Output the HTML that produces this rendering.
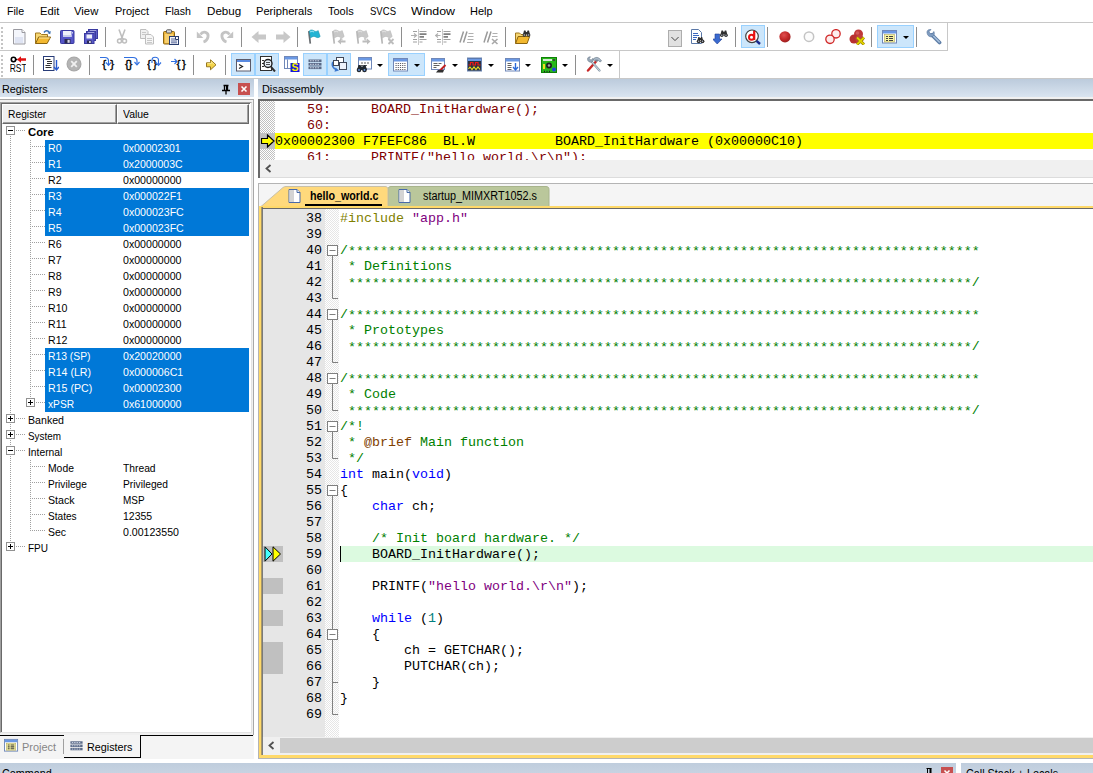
<!DOCTYPE html>
<html><head><meta charset="utf-8"><title>uVision</title>
<style>
*{box-sizing:border-box;margin:0;padding:0}
html,body{width:1093px;height:773px;overflow:hidden;background:#fff}
body{position:relative;font-family:"Liberation Sans",sans-serif;font-size:12px;color:#000}
.a{position:absolute}
.f{transform-origin:0 50%;display:inline-block}
.menu span{position:absolute;top:4px;font-size:11.500px;line-height:14px;white-space:nowrap;color:#000}
.tb{position:absolute;background:#fff}
.ttl{position:absolute;height:18px;top:79px;background:linear-gradient(#bccbdc,#d9e4f0);font-size:11.500px;line-height:20px;color:#000;overflow:hidden}
.tree{position:absolute;font-size:11px;line-height:16px;white-space:nowrap}
.row{position:absolute;left:0;height:16px;white-space:nowrap}
.sel{position:absolute;left:45px;width:204px;height:16px;background:#0078d7}
.row span{position:absolute;top:0}
.w{color:#fff}
.mono{font-family:"Liberation Mono",monospace;font-size:13.333px;line-height:16px;white-space:pre}
.dis{color:#800000}
.ln{position:absolute;left:262px;width:60px;text-align:right;color:#000}
.cl{position:absolute;left:340px}
.as{position:relative;top:1px}
.cm{color:#008000}.kw{color:#0000ff}.st{color:#800080}.pp{color:#808000}.nm{color:#008080}
</style></head><body>

<div class="a menu" style="left:0;top:0;width:1093px;height:22px;background:#fff">
<span class="f" style="left:6.7px;transform:scaleX(0.923)">File</span>
<span class="f" style="left:39.5px;transform:scaleX(0.973)">Edit</span>
<span class="f" style="left:74.2px;transform:scaleX(0.983)">View</span>
<span class="f" style="left:114.7px;transform:scaleX(0.950)">Project</span>
<span class="f" style="left:164.8px;transform:scaleX(0.924)">Flash</span>
<span class="f" style="left:206.5px;transform:scaleX(1.009)">Debug</span>
<span class="f" style="left:256.2px;transform:scaleX(0.968)">Peripherals</span>
<span class="f" style="left:328px;transform:scaleX(0.957)">Tools</span>
<span class="f" style="left:370.3px;transform:scaleX(0.830)">SVCS</span>
<span class="f" style="left:411.3px;transform:scaleX(1.076)">Window</span>
<span class="f" style="left:470.2px;transform:scaleX(0.955)">Help</span>
</div>
<div class="a" style="left:0;top:22px;width:1093px;height:1px;background:#c8c8c8"></div>
<div class="a" style="left:0;top:50px;width:948px;height:1px;background:#c8c8c8"></div>
<div class="a" style="left:947px;top:22px;width:1px;height:29px;background:#c8c8c8"></div>
<div class="a" style="left:0;top:78px;width:1093px;height:1px;background:#c8c8c8"></div>
<div class="a" style="left:619px;top:50px;width:1px;height:29px;background:#c8c8c8"></div>
<div class="a" style="left:1px;top:27px;width:2px;height:2px;background:#c4c4c4"></div>
<div class="a" style="left:1px;top:31px;width:2px;height:2px;background:#c4c4c4"></div>
<div class="a" style="left:1px;top:35px;width:2px;height:2px;background:#c4c4c4"></div>
<div class="a" style="left:1px;top:39px;width:2px;height:2px;background:#c4c4c4"></div>
<div class="a" style="left:1px;top:43px;width:2px;height:2px;background:#c4c4c4"></div>
<div class="a" style="left:1px;top:47px;width:2px;height:2px;background:#c4c4c4"></div>
<div class="a" style="left:1px;top:55px;width:2px;height:2px;background:#c4c4c4"></div>
<div class="a" style="left:1px;top:59px;width:2px;height:2px;background:#c4c4c4"></div>
<div class="a" style="left:1px;top:63px;width:2px;height:2px;background:#c4c4c4"></div>
<div class="a" style="left:1px;top:67px;width:2px;height:2px;background:#c4c4c4"></div>
<div class="a" style="left:1px;top:71px;width:2px;height:2px;background:#c4c4c4"></div>
<div class="a" style="left:1px;top:75px;width:2px;height:2px;background:#c4c4c4"></div>
<svg class="a" style="left:12px;top:29px" width="16" height="16" viewBox="0 0 16 16"><path d="M1.5 .5h8.5l3 3v11.5h-11.5z" fill="#f4f6fc" stroke="#9a9aa0"/><path d="M3 8h8v6h-8z" fill="#dfe4f3" stroke="none"/><path d="M10 .5v3h3" fill="#fff" stroke="#9a9aa0"/></svg>
<svg class="a" style="left:35px;top:29px" width="16" height="16" viewBox="0 0 16 16"><path d="M9 3.5c1.5-2.3 4.5-2.3 5.5.3" fill="none" stroke="#3a6fb0" stroke-width="1.4"/><path d="M15.8 2l-.6 3.2-2.8-1.2z" fill="#3a6fb0"/><path d="M.5 14.5v-10.500h4.500l1.500 1.500h6v3" fill="#f7d774" stroke="#a07820"/><path d="M.6 14.500l3-6.500h12l-3.500 6.500z" fill="#f2b830" stroke="#8a6410"/><path d="M4 9h10.500" stroke="#fde9a0" stroke-width="1"/></svg>
<svg class="a" style="left:60px;top:29px" width="16" height="16" viewBox="0 0 16 16"><rect x=".5" y="1.500" width="13.500" height="13" rx=".8" fill="#5555c8" stroke="#3a3aa0"/><rect x="3" y="2" width="8.500" height="6" fill="#eef0fa"/><path d="M3 6h8.500v2h-8.500z" fill="#c8cdea"/><rect x="4.500" y="10" width="6" height="4.500" fill="#2a2a50"/><rect x="7.500" y="10.800" width="2.200" height="3" fill="#d8d8e8"/><rect x="12" y="3" width="1" height="1.500" fill="#c8cdea"/></svg>
<svg class="a" style="left:84px;top:29px" width="16" height="16" viewBox="0 0 16 16"><rect x="4.500" y=".5" width="9" height="9" fill="#6060c8" stroke="#3a3aa0"/><rect x="6" y="1.500" width="6" height="1.500" fill="#e8eaf8"/><rect x="2.500" y="2.500" width="9" height="9" fill="#6060c8" stroke="#3a3aa0"/><rect x="4" y="3.500" width="6" height="1.500" fill="#e8eaf8"/><rect x=".5" y="4.500" width="9.500" height="10" fill="#5a5ac8" stroke="#3a3aa0"/><rect x="2.500" y="5.500" width="5.500" height="4" fill="#eef0fa"/><rect x="3" y="11.500" width="4.500" height="3" fill="#2a2a50"/><rect x="5" y="12" width="1.800" height="2" fill="#d0d0e0"/></svg>
<svg class="a" style="left:114px;top:29px" width="16" height="16" viewBox="0 0 16 16"><path d="M5 .5l3 8M11 .5l-3 8" stroke="#bebebe" stroke-width="1.600" fill="none"/><circle cx="5.500" cy="12" r="2" fill="none" stroke="#bebebe" stroke-width="1.500"/><circle cx="10.500" cy="12" r="2" fill="none" stroke="#bebebe" stroke-width="1.500"/><path d="M8 8.500l-1.800 2M8 8.500l1.800 2" stroke="#bebebe" stroke-width="1.400"/></svg>
<svg class="a" style="left:139px;top:29px" width="16" height="16" viewBox="0 0 16 16"><path d="M1.500 .5h5.500l2 2v7h-7.500z" fill="#f0f0f0" stroke="#bebebe"/><path d="M6.500 5.500h5.500l2.500 2.500v7h-8z" fill="#f6f6f6" stroke="#bebebe"/><path d="M3 3.500h4M3 5.500h3M8 9.500h5M8 11.500h5M8 13.500h5" stroke="#c8c8c8"/></svg>
<svg class="a" style="left:163px;top:29px" width="16" height="16" viewBox="0 0 16 16"><rect x=".5" y="2.500" width="11" height="12.500" rx="1" fill="#eab33a" stroke="#8a6414"/><rect x="3.500" y=".8" width="5" height="3.200" rx=".8" fill="#d8d8d8" stroke="#5a5a5a"/><rect x="2" y="5" width="8" height="9" fill="#f7d070"/><rect x="6.500" y="7.500" width="9" height="8" fill="#f2f4fa" stroke="#283c6e"/><path d="M8 10h4M8 12h6M8 13.800h6" stroke="#5a6a9a"/><path d="M12.500 7.500v3h3" fill="#fff" stroke="#283c6e"/></svg>
<svg class="a" style="left:195px;top:29px" width="16" height="16" viewBox="0 0 16 16"><path d="M5.500 5.500c2.500-4 8.500-2.500 7.500 2.500c-.5 2.500-2 4.200-4.500 5" fill="none" stroke="#c4c4c4" stroke-width="2.800"/><path d="M1.800 2.500v6.500h6.500z" fill="#c4c4c4"/></svg>
<svg class="a" style="left:219px;top:29px" width="16" height="16" viewBox="0 0 16 16"><path d="M10.500 5.500c-2.500-4-8.500-2.500-7.500 2.500c.5 2.500 2 4.200 4.500 5" fill="none" stroke="#c4c4c4" stroke-width="2.800"/><path d="M14.200 2.500v6.500h-6.500z" fill="#c4c4c4"/></svg>
<svg class="a" style="left:251px;top:29px" width="16" height="16" viewBox="0 0 16 16"><path d="M.5 8l7-6v3.500h7.500v5h-7.500v3.500z" fill="#c8c8c8"/></svg>
<svg class="a" style="left:275px;top:29px" width="16" height="16" viewBox="0 0 16 16"><path d="M15.500 8l-7-6v3.500h-7.500v5h7.500v3.500z" fill="#c8c8c8"/></svg>
<svg class="a" style="left:307px;top:29px" width="16" height="16" viewBox="0 0 16 16"><path d="M1.800 2.200l1.500 12.500" stroke="#686c70" stroke-width="1.700"/><path d="M2.200 2c1.600-1.600 3.300-1.300 4.800-.2c1.500 1.100 3 .6 4.200-.3l2 6c-1.400 1.400-3 1.500-4.500.5c-1.600-1-3.500-.6-5.200 1z" fill="#22b4d4" stroke="#1890a8" stroke-width=".5"/><path d="M3.200 3c1.500-1.200 2.800-.8 4 .1" stroke="#90e4f4" stroke-width="1.100" fill="none"/></svg>
<svg class="a" style="left:331px;top:29px" width="16" height="16" viewBox="0 0 16 16"><path d="M1.800 2.200l1.500 12.500" stroke="#b8b8b8" stroke-width="1.700"/><path d="M2.200 2c1.600-1.600 3.300-1.300 4.800-.2c1.500 1.100 3 .6 4.200-.3l2 6c-1.400 1.400-3 1.500-4.500.5c-1.600-1-3.500-.6-5.200 1z" fill="#c8c8c8" stroke="#b4b4b4" stroke-width=".5"/><path d="M9 8l2.500 1.500v2.500l-2.500-1.500z" fill="#cccccc"/><path d="M3.200 3c1.500-1.200 2.800-.8 4 .1" stroke="#e0e0e0" stroke-width="1.100" fill="none"/><path d="M6.500 12.500l3.500-3v2h4.500v2h-4.500v2z" fill="#bcbcbc"/></svg>
<svg class="a" style="left:355px;top:29px" width="16" height="16" viewBox="0 0 16 16"><path d="M1.800 2.200l1.500 12.500" stroke="#b8b8b8" stroke-width="1.700"/><path d="M2.200 2c1.600-1.600 3.300-1.300 4.800-.2c1.500 1.100 3 .6 4.200-.3l2 6c-1.400 1.400-3 1.500-4.500.5c-1.600-1-3.500-.6-5.200 1z" fill="#c8c8c8" stroke="#b4b4b4" stroke-width=".5"/><path d="M9 8l2.500 1.500v2.500l-2.500-1.500z" fill="#cccccc"/><path d="M3.200 3c1.500-1.200 2.800-.8 4 .1" stroke="#e0e0e0" stroke-width="1.100" fill="none"/><path d="M15.500 12.500l-3.500-3v2h-4.500v2h4.500v2z" fill="#bcbcbc"/></svg>
<svg class="a" style="left:379px;top:29px" width="16" height="16" viewBox="0 0 16 16"><path d="M1.800 2.200l1.500 12.500" stroke="#b8b8b8" stroke-width="1.700"/><path d="M2.200 2c1.600-1.600 3.300-1.300 4.800-.2c1.500 1.100 3 .6 4.200-.3l2 6c-1.400 1.400-3 1.500-4.500.5c-1.600-1-3.500-.6-5.200 1z" fill="#c8c8c8" stroke="#b4b4b4" stroke-width=".5"/><path d="M9 8l2.500 1.500v2.500l-2.500-1.500z" fill="#cccccc"/><path d="M3.200 3c1.500-1.200 2.800-.8 4 .1" stroke="#e0e0e0" stroke-width="1.100" fill="none"/><path d="M9.500 10l5 5M14.500 10l-5 5" stroke="#bcbcbc" stroke-width="1.800"/></svg>
<svg class="a" style="left:411px;top:29px" width="16" height="16" viewBox="0 0 16 16"><path d="M8.500 2.500h7M2 2.500h4M2 10.500h4M8.500 10.500h7M2 13h4M8.500 13h3" stroke="#a0a0a0" stroke-width="1.200"/><path d="M8.500 5.200h7M8.500 7.800h4.500" stroke="#808080" stroke-width="1.800"/><path d="M7.500 .5v15" stroke="#909090" stroke-dasharray="1 1"/><path d="M0 6.500h5M3 4.500l2.500 2-2.500 2" stroke="#b0b0b0" fill="none" stroke-width="1.200"/></svg>
<svg class="a" style="left:435px;top:29px" width="16" height="16" viewBox="0 0 16 16"><path d="M8.500 2.500h7M2 2.500h4M2 10.500h4M8.500 10.500h7M2 13h4M8.500 13h3" stroke="#a0a0a0" stroke-width="1.200"/><path d="M8.500 5.200h7M8.500 7.800h4.500" stroke="#808080" stroke-width="1.800"/><path d="M7.500 .5v15" stroke="#909090" stroke-dasharray="1 1"/><path d="M.5 6.500h5M3 4.500l-2.500 2 2.500 2" stroke="#b0b0b0" fill="none" stroke-width="1.200"/></svg>
<svg class="a" style="left:459px;top:29px" width="16" height="16" viewBox="0 0 16 16"><path d="M1 13.500l3.500-11M4.500 13.500l3.500-11" stroke="#9a9a9a" stroke-width="1.500"/><path d="M9.500 4.500h5M9 7.500h5.500M8.500 10.500h6M8 13.500h6" stroke="#b0b0b0"/></svg>
<svg class="a" style="left:483px;top:29px" width="16" height="16" viewBox="0 0 16 16"><path d="M1 13.500l3.500-11M4.500 13.500l3.500-11" stroke="#9a9a9a" stroke-width="1.500"/><path d="M9.500 4.500h5M9 7.500h5.500" stroke="#b0b0b0"/><path d="M9 10l5.500 5M14.500 10l-5.500 5" stroke="#a8a8a8" stroke-width="1.600"/></svg>
<svg class="a" style="left:515px;top:29px" width="16" height="16" viewBox="0 0 16 16"><path d="M.5 14.500v-10.500h4l1.500 1.500h5v2.500" fill="#f7d774" stroke="#a07820"/><path d="M.6 14.500l2.500-7h11.500l-2.500 7z" fill="#f2b830" stroke="#8a6410"/><path d="M8 5.500l1-4h1.500l.5 1.500h1l.5-1.500h1.500l1 4z" fill="#303030"/><circle cx="9.300" cy="6" r="1.700" fill="#303030"/><circle cx="13.700" cy="6" r="1.700" fill="#303030"/><circle cx="9.300" cy="6" r=".7" fill="#c0c8d8"/><circle cx="13.700" cy="6" r=".7" fill="#c0c8d8"/></svg>
<div class="a" style="left:105px;top:27px;width:1px;height:20px;background:#8e8e8e"></div>
<div class="a" style="left:185px;top:27px;width:1px;height:20px;background:#8e8e8e"></div>
<div class="a" style="left:241px;top:27px;width:1px;height:20px;background:#8e8e8e"></div>
<div class="a" style="left:297px;top:27px;width:1px;height:20px;background:#8e8e8e"></div>
<div class="a" style="left:401px;top:27px;width:1px;height:20px;background:#8e8e8e"></div>
<div class="a" style="left:505px;top:27px;width:1px;height:20px;background:#8e8e8e"></div>
<div class="a" style="left:668px;top:30px;width:14px;height:17px;background:#e1e1e1;border:1px solid #adadad"></div>
<svg class="a" style="left:671px;top:36px" width="8" height="6" viewBox="0 0 9 6"><path d="M.5 .8l4 4 4-4" fill="none" stroke="#404040" stroke-width="1.100"/></svg>
<svg class="a" style="left:690px;top:29px" width="16" height="16" viewBox="0 0 16 16"><path d="M1.500 .5h7l3 3v11h-10z" fill="#fff" stroke="#5a78a8"/><path d="M3 4.500h5M3 6.500h6M3 8.500h4M3 10.500h3" stroke="#3a68c0"/><path d="M7.500 11l.8-3h1.200l.3 1h.9l.3-1h1.200l.8 3z" fill="#303030"/><circle cx="8.700" cy="12.300" r="1.900" fill="#303030"/><circle cx="12.500" cy="12.300" r="1.900" fill="#303030"/><circle cx="8.700" cy="12.300" r=".7" fill="#b0b8c8"/><circle cx="12.500" cy="12.300" r=".7" fill="#b0b8c8"/></svg>
<svg class="a" style="left:713px;top:29px" width="16" height="16" viewBox="0 0 16 16"><path d="M2 5h4.500v5h2.500l-4.800 5-4.700-5h2.500z" fill="#3a6ad0" stroke="#1e3c90" stroke-width=".6"/><path d="M7.500 5.500l1-4h1.500l.4 1.200h1l.4-1.200h1.500l1 4z" fill="#303030"/><circle cx="8.800" cy="6.300" r="1.800" fill="#303030"/><circle cx="13" cy="6.300" r="1.800" fill="#303030"/><circle cx="8.800" cy="6.300" r=".7" fill="#b0b8c8"/><circle cx="13" cy="6.300" r=".7" fill="#b0b8c8"/></svg>
<div class="a" style="left:735px;top:27px;width:1px;height:20px;background:#8e8e8e"></div>
<div class="a" style="left:741px;top:25px;width:24px;height:23px;background:#cce6fb;border:1px solid #99d1ff"></div>
<svg class="a" style="left:745px;top:29px" width="16" height="16" viewBox="0 0 16 16"><circle cx="7" cy="7.300" r="6.300" fill="#fff" stroke="#404040" stroke-width="1.200"/><path d="M11.500 11.800l3.500 3.200" stroke="#1a2a90" stroke-width="2.400"/><path d="M9.200 1.800v9.200" stroke="#e81010" stroke-width="2.200"/><circle cx="6.500" cy="8.200" r="2.500" fill="none" stroke="#e81010" stroke-width="2"/></svg>
<div class="a" style="left:767px;top:27px;width:1px;height:20px;background:#8e8e8e"></div>
<svg class="a" style="left:777px;top:29px" width="16" height="16" viewBox="0 0 16 16"><defs><radialGradient id="rg1" cx=".4" cy=".35" r=".7"><stop offset="0" stop-color="#e05050"/><stop offset=".6" stop-color="#c02828"/><stop offset="1" stop-color="#982020"/></radialGradient></defs><circle cx="8" cy="7.800" r="5.600" fill="url(#rg1)"/></svg>
<svg class="a" style="left:801px;top:29px" width="16" height="16" viewBox="0 0 16 16"><circle cx="8" cy="7.700" r="4.700" fill="#fcfcfc" stroke="#c4c4c4" stroke-width="1.500"/></svg>
<svg class="a" style="left:825px;top:29px" width="16" height="16" viewBox="0 0 16 16"><circle cx="11" cy="4.800" r="4.200" fill="#fdecec" stroke="#d02828" stroke-width="1.300"/><circle cx="5" cy="10.300" r="4.200" fill="#fdecec" stroke="#d02828" stroke-width="1.300"/></svg>
<svg class="a" style="left:849px;top:29px" width="16" height="16" viewBox="0 0 16 16"><circle cx="9.500" cy="5" r="4.500" fill="#c03838"/><circle cx="5" cy="10" r="4.500" fill="#b83030"/><circle cx="10.500" cy="10" r="4" fill="#c04040"/><circle cx="8.500" cy="4" r="1.800" fill="#e07070" opacity=".6"/><path d="M8 8.500l7 7M15 8.500l-7 7" stroke="#8a7800" stroke-width="3"/><path d="M8 8.500l7 7M15 8.500l-7 7" stroke="#e0d000" stroke-width="1.800"/></svg>
<div class="a" style="left:871px;top:27px;width:1px;height:20px;background:#8e8e8e"></div>
<div class="a" style="left:877px;top:25px;width:37px;height:23px;background:#cce6fb;border:1px solid #99d1ff"></div>
<svg class="a" style="left:882px;top:29px" width="16" height="16" viewBox="0 0 16 16"><rect x=".5" y="1.500" width="14" height="12.500" fill="#fff" stroke="#7088b8"/><rect x="1" y="2" width="13" height="2.500" fill="#6a98e4"/><rect x="2.500" y="5.500" width="10" height="7.500" fill="#f8f4a0" stroke="#b0a860" stroke-width=".6"/><path d="M4 7.500h2M4 9.500h2M4 11.500h2M7 7.500h4M7 9.500h4M7 11.500h4" stroke="#404040" stroke-width="1.200"/></svg>
<svg class="a" style="left:903px;top:36px" width="6" height="3" viewBox="0 0 6 3"><path d="M0 0h6l-3 3z" fill="#000"/></svg>
<div class="a" style="left:916px;top:27px;width:1px;height:20px;background:#8e8e8e"></div>
<svg class="a" style="left:926px;top:29px" width="16" height="16" viewBox="0 0 16 16"><path d="M13.500 13.500l-7.500-7.500" stroke="#5f7fa8" stroke-width="3.800" stroke-linecap="round"/><path d="M13.300 13l-7-7" stroke="#a8c0dc" stroke-width="1.400" stroke-linecap="round"/><path d="M1 3.500c-.3-2 1.700-3.500 4-3l-2 2.200 1 1.800 2.300.3 1.500-2.300c1 1.500.5 4-1.300 5c-2.500 1-5.200-.5-5.500-4z" fill="#7f9cc0" stroke="#4f6f98" stroke-width=".6"/></svg>
<svg class="a" style="left:10px;top:56px" width="16" height="16" viewBox="0 0 16 16"><circle cx="3.500" cy="3.500" r="2.200" fill="none" stroke="#000" stroke-width="1.600"/><path d="M5.500 3.500h2" stroke="#000" stroke-width="1.400"/><path d="M7 3.500l4-3.300v2.100h5v2.400h-5v2.100z" fill="#e01010"/><text x="-.3" y="15.500" font-family="Liberation Sans,sans-serif" font-size="10.500" textLength="17" lengthAdjust="spacingAndGlyphs" fill="#000">RST</text></svg>
<svg class="a" style="left:43px;top:56px" width="16" height="16" viewBox="0 0 16 16"><rect x=".5" y=".5" width="10.500" height="14" fill="#fff" stroke="#283c78"/><path d="M2.500 3.500h5M4 5.500h5M4 7.500h5M2.500 9.500h5M2.500 11.500h6" stroke="#303030"/><path d="M13.500 4v10M11 11l2.500 3 2.500-3" stroke="#2a5ad0" stroke-width="1.400" fill="none"/></svg>
<svg class="a" style="left:66px;top:56px" width="16" height="16" viewBox="0 0 16 16"><circle cx="8" cy="8" r="7.500" fill="#a8a8a8"/><circle cx="8" cy="8" r="6.500" fill="#b4b4b4"/><path d="M5.200 5.200l5.600 5.600M10.800 5.200l-5.600 5.600" stroke="#f0f0f0" stroke-width="1.800"/></svg>
<svg class="a" style="left:100px;top:56px" width="16" height="16" viewBox="0 0 16 16"><text x="2.200" y="12" font-family="Liberation Sans,sans-serif" font-size="11.800" fill="#000" stroke="#000" stroke-width=".35">{<tspan dx="4.100">}</tspan></text><path d="M0 1.500h5c2.500 0 3.500 1.500 3.500 3.500v4" fill="none" stroke="#2f6fe0" stroke-width="1.150"/><path d="M6 6.500l2.500 2.800 2.500-2.800" fill="none" stroke="#2f6fe0" stroke-width="1.150"/></svg>
<svg class="a" style="left:124px;top:56px" width="16" height="16" viewBox="0 0 16 16"><text x="1" y="12" font-family="Liberation Sans,sans-serif" font-size="11.800" fill="#000" stroke="#000" stroke-width=".35">{<tspan dx="-.5">}</tspan></text><path d="M0 1.500h9c3 0 4 1.500 4 3.500v3.500" fill="none" stroke="#2f6fe0" stroke-width="1.150"/><path d="M10.500 6l2.500 2.800 2.500-2.800" fill="none" stroke="#2f6fe0" stroke-width="1.150"/></svg>
<svg class="a" style="left:147px;top:56px" width="16" height="16" viewBox="0 0 16 16"><text x="0" y="12" font-family="Liberation Sans,sans-serif" font-size="11.800" fill="#000" stroke="#000" stroke-width=".35">{<tspan dx="2">}</tspan></text><path d="M5 7v-3c0-2 1.200-2.800 3-2.800s3.500.8 3.500 3v4.500" fill="none" stroke="#2f6fe0" stroke-width="1.150"/><path d="M9 6.500l2.500 2.800 2.500-2.800" fill="none" stroke="#2f6fe0" stroke-width="1.150"/></svg>
<svg class="a" style="left:171px;top:56px" width="16" height="16" viewBox="0 0 16 16"><text x="5.500" y="12" font-family="Liberation Sans,sans-serif" font-size="11.800" fill="#000" stroke="#000" stroke-width=".35">{<tspan dx="1.500">}</tspan></text><path d="M0 5.500h6M3.500 3l2.500 2.500-2.500 2.500" fill="none" stroke="#2f6fe0" stroke-width="1.150"/></svg>
<svg class="a" style="left:202px;top:56px" width="16" height="16" viewBox="0 0 16 16"><path d="M4.500 6.800h4v-3l5.500 5-5.500 5v-3h-4z" fill="#f4d44a" stroke="#8a6a10" stroke-width=".9"/><path d="M5.300 7.600h4v-2l3 3" fill="none" stroke="#fff0a0" stroke-width=".8"/></svg>
<div class="a" style="left:33px;top:55px;width:1px;height:20px;background:#8e8e8e"></div>
<div class="a" style="left:89px;top:55px;width:1px;height:20px;background:#8e8e8e"></div>
<div class="a" style="left:193px;top:55px;width:1px;height:20px;background:#8e8e8e"></div>
<div class="a" style="left:225px;top:55px;width:1px;height:20px;background:#8e8e8e"></div>
<div class="a" style="left:575px;top:55px;width:1px;height:20px;background:#8e8e8e"></div>
<div class="a" style="left:231px;top:53px;width:24px;height:23px;background:#cce6fb;border:1px solid #99d1ff"></div>
<div class="a" style="left:255px;top:53px;width:24px;height:23px;background:#cce6fb;border:1px solid #99d1ff"></div>
<svg class="a" style="left:236px;top:56px" width="16" height="16" viewBox="0 0 16 16"><rect x=".5" y="3.500" width="14" height="11.500" fill="#fff" stroke="#5a5a6a"/><rect x="1" y="4" width="13" height="2" fill="#5a8ae0"/><path d="M3 8.500l3.500 2-3.500 2" fill="none" stroke="#202020" stroke-width="1.200"/></svg>
<svg class="a" style="left:260px;top:56px" width="16" height="16" viewBox="0 0 16 16"><rect x=".5" y=".5" width="11" height="14" fill="#fff" stroke="#303030"/><path d="M2 4.500h2M2 7.500h2M2 10.500h2" stroke="#303030"/><circle cx="8" cy="7.500" r="4" fill="#e8f0f8" stroke="#202020" stroke-width="1.400"/><path d="M6 6.500h4M6 8.500h4" stroke="#505050"/><path d="M11 11l4 4.500" stroke="#303030" stroke-width="2"/></svg>
<svg class="a" style="left:284px;top:56px" width="16" height="16" viewBox="0 0 16 16"><rect x=".5" y=".5" width="13" height="12" fill="#fff" stroke="#7088b8"/><rect x="1" y="1" width="12" height="2.500" fill="#6a98e4"/><path d="M3.500 3.500v9" stroke="#7088b8"/><rect x="6.500" y="7" width="9" height="9" fill="#1818d8"/><text x="7.500" y="15.300" font-family="Liberation Sans,sans-serif" font-size="10.500" font-weight="bold" fill="#f8f000">S</text></svg>
<div class="a" style="left:303px;top:53px;width:24px;height:23px;background:#cce6fb;border:1px solid #99d1ff"></div>
<div class="a" style="left:327px;top:53px;width:24px;height:23px;background:#cce6fb;border:1px solid #99d1ff"></div>
<svg class="a" style="left:307px;top:56px" width="16" height="16" viewBox="0 0 16 16"><rect x="1.500" y="3.500" width="13" height="2.600" fill="#5a6a88"/><rect x="1.500" y="7" width="13" height="2.600" fill="#5a6a88"/><rect x="1.500" y="10.500" width="13" height="2.600" fill="#5a6a88"/><path d="M3 4.800h10M3 8.300h10M3 11.800h10" stroke="#d0d8e8" stroke-dasharray="1.500 1"/></svg>
<svg class="a" style="left:331px;top:56px" width="16" height="16" viewBox="0 0 16 16"><rect x="5.500" y="1.500" width="7" height="6" fill="#fff" stroke="#404858"/><rect x="8.500" y="6.500" width="7" height="7" fill="#fff" stroke="#404858"/><rect x="9" y="7" width="6" height="6" fill="#eef2fa"/><path d="M2 6c-1.500 3 0 7 4 8" fill="none" stroke="#3a78d0" stroke-width="1.800"/><path d="M4.500 11.500l3.500 3-4.500 1.200z" fill="#3a78d0"/><rect x="2.500" y="4.500" width="5" height="5" fill="#fff" stroke="#404858"/></svg>
<svg class="a" style="left:356px;top:57px" width="16" height="16" viewBox="0 0 16 16"><rect x="2.500" y=".5" width="13" height="11.500" fill="#fff" stroke="#7088b8"/><rect x="3" y="1" width="12" height="2.500" fill="#6a98e4"/><path d="M5 6h2M8 6h2M11 6h2M5 8.500h2M8 8.500h3" stroke="#606060"/><path d="M1 13l1.500-5h2l.8 1.500h1.400l.8-1.500h2l1.500 5z" fill="#202830"/><circle cx="3" cy="13" r="2.300" fill="#202830"/><circle cx="8.500" cy="13" r="2.300" fill="#202830"/><circle cx="3" cy="13" r=".9" fill="#6a98e4"/><circle cx="8.500" cy="13" r=".9" fill="#6a98e4"/></svg>
<svg class="a" style="left:377px;top:64px" width="6" height="3" viewBox="0 0 6 3"><path d="M0 0h6l-3 3z" fill="#000"/></svg>
<div class="a" style="left:388px;top:53px;width:37px;height:23px;background:#cce6fb;border:1px solid #99d1ff"></div>
<svg class="a" style="left:393px;top:57px" width="16" height="16" viewBox="0 0 16 16"><rect x=".5" y="1.500" width="14" height="12.500" fill="#fff" stroke="#7088b8"/><rect x="1" y="2" width="13" height="2.500" fill="#6a98e4"/><path d="M2.500 6.500h10M2.500 8.500h10M2.500 10.500h10M2.500 12.500h10" stroke="#606068" stroke-dasharray="1.200 1"/></svg>
<svg class="a" style="left:414px;top:64px" width="6" height="3" viewBox="0 0 6 3"><path d="M0 0h6l-3 3z" fill="#000"/></svg>
<svg class="a" style="left:431px;top:57px" width="16" height="16" viewBox="0 0 16 16"><rect x=".5" y="1.500" width="13" height="11" fill="#fff" stroke="#7088b8"/><rect x="1" y="2" width="12" height="2.500" fill="#6a98e4"/><path d="M2.500 6.500h4M7.500 6.500h3M2.500 8.500h6M2.500 10.500h3" stroke="#606060"/><path d="M8 14.500l6.500-6.500" stroke="#c02020" stroke-width="2"/><path d="M5 15.500h7l1-2.500h-6z" fill="#303030"/></svg>
<svg class="a" style="left:452px;top:64px" width="6" height="3" viewBox="0 0 6 3"><path d="M0 0h6l-3 3z" fill="#000"/></svg>
<svg class="a" style="left:467px;top:57px" width="16" height="16" viewBox="0 0 16 16"><rect x=".5" y="1" width="14" height="13" fill="#2a3242" stroke="#6a84b0"/><rect x="1" y="1.500" width="13" height="2.500" fill="#6a98e4"/><path d="M1.500 8h2v-2.500h2.500v2.500h2.500v-2.500h2.500v2.500h2.500" fill="none" stroke="#f01818" stroke-width="1.200"/><path d="M1.500 11.800l1.500-1.800 2 2.500 2-2.500 2 2.500 2-2.500 2 2.500" fill="none" stroke="#f0e020" stroke-width="1.100"/></svg>
<svg class="a" style="left:488px;top:64px" width="6" height="3" viewBox="0 0 6 3"><path d="M0 0h6l-3 3z" fill="#000"/></svg>
<svg class="a" style="left:505px;top:57px" width="16" height="16" viewBox="0 0 16 16"><rect x=".5" y="1.500" width="14" height="12.500" fill="#fff" stroke="#7088b8"/><rect x="1" y="2" width="13" height="2.500" fill="#6a98e4"/><path d="M2.500 6.500h4M2.500 8.500h4M2.500 10.500h4M2.500 12.500h4" stroke="#606060"/><path d="M10.500 6v6.500M8 10l2.500 3 2.500-3" fill="none" stroke="#2a6ad8" stroke-width="1.400"/></svg>
<svg class="a" style="left:525px;top:64px" width="6" height="3" viewBox="0 0 6 3"><path d="M0 0h6l-3 3z" fill="#000"/></svg>
<svg class="a" style="left:541px;top:57px" width="16" height="16" viewBox="0 0 16 16"><rect x=".5" y=".5" width="15" height="15" fill="#28b818" stroke="#108008"/><rect x="2" y="2" width="9" height="2" fill="#d8e8d8"/><rect x="12" y="2" width="2" height="2" fill="#404040"/><circle cx="8" cy="8.500" r="3" fill="#202020"/><circle cx="8" cy="8.500" r="1.200" fill="#a0a8a0"/><rect x="2" y="7" width="2" height="5" fill="#f0e020"/><circle cx="13" cy="12.500" r="2" fill="#2040e0"/><path d="M3 14.500h1M5.500 14.500h1M8 14.500h1" stroke="#202020" stroke-width="1.500"/></svg>
<svg class="a" style="left:562px;top:64px" width="6" height="3" viewBox="0 0 6 3"><path d="M0 0h6l-3 3z" fill="#000"/></svg>
<svg class="a" style="left:586px;top:56px" width="16" height="16" viewBox="0 0 16 16"><path d="M2 14.500l8-9" stroke="#c82828" stroke-width="2.400" stroke-linecap="round"/><path d="M10 5.500l2.500-3" stroke="#8090a0" stroke-width="2"/><path d="M7 3.500c2-3 6-3 8.500 1.500l-1.500 1c-1.500-2-3.500-2.500-5.500-1.500z" fill="#a8b8c8" stroke="#607080" stroke-width=".6"/><path d="M13.500 14.500l-8-9" stroke="#8898a8" stroke-width="2.200" stroke-linecap="round"/><path d="M13.500 14.500l-8-9" stroke="#e0e8f0" stroke-width=".8" stroke-linecap="round"/><path d="M1.500 3c0-1.500 1.500-2.500 3-2.200l-1.200 1.700.8 1.200 1.900.1.900-1.600c.8 1.400.3 3-1 3.800c-1.800.8-4.400-.4-4.400-3z" fill="#98a8b8" stroke="#607080" stroke-width=".5"/></svg>
<svg class="a" style="left:607px;top:64px" width="6" height="3" viewBox="0 0 6 3"><path d="M0 0h6l-3 3z" fill="#000"/></svg>
<div class="a" style="left:0;top:97px;width:254px;height:3px;background:#fff;border-bottom:1px solid #a8a8a8"></div>
<div class="a" style="left:0;top:100px;width:254px;height:662px;background:#f0f0f0"></div>
<div class="a" style="left:253px;top:99px;width:1px;height:636px;background:#a8a8a8"></div>
<div class="ttl" style="left:0;width:254px"><span class="a f" style="left:1.500px;top:0;transform:scaleX(0.941)">Registers</span></div>
<svg class="a" style="left:221px;top:84px" width="10" height="11" viewBox="0 0 10 11"><path d="M2.5 1.5h5M3.5 1.5v4.5M6.5 1v5.5M1 6.5h8M5 7v3.5" stroke="#000" stroke-width="1.3" fill="none"/><rect x="5" y="2" width="2" height="4" fill="#000"/></svg>
<div class="a" style="left:238px;top:83px;width:12px;height:12px;background:#c75050"></div>
<svg class="a" style="left:238px;top:83px" width="12" height="12" viewBox="0 0 12 12"><path d="M3.5 3.5l5 5M8.5 3.5l-5 5" stroke="#fff" stroke-width="1.6"/></svg>
<div class="a" style="left:0px;top:102px;width:252px;height:631px;background:#fff;border:1px solid #a0a0a0;border-right-color:#e3e3e3;border-bottom-color:#e3e3e3"></div>
<div class="a" style="left:1px;top:103px;width:249px;height:629px;border:1px solid #696969;border-right:none;border-bottom:none"></div>
<div class="a" style="left:2px;top:104px;width:115px;height:20px;background:#f0f0f0;border:1px solid #fff;border-right:1px solid #696969;border-bottom:1px solid #696969;box-shadow:inset -1px -1px 0 #a0a0a0"></div>
<div class="a" style="left:117px;top:104px;width:132px;height:20px;background:#f0f0f0;border:1px solid #fff;border-right:1px solid #696969;border-bottom:1px solid #696969;box-shadow:inset -1px -1px 0 #a0a0a0"></div>
<div class="tree" style="left:0;top:0">
<div class="row" style="top:106px"><span class="f " style="left:8.3px;transform:scaleX(0.935)">Register</span><span class="f " style="left:123.4px;transform:scaleX(0.948)">Value</span></div>
<div class="row" style="top:124px"><span class="f " style="left:28px;font-weight:bold;transform:scaleX(1.029)">Core</span></div>
<div class="sel" style="top:140px"></div>
<div class="row" style="top:140px"><span class="f w" style="left:48.4px;transform:scaleX(0.967)">R0</span><span class="f w" style="left:123.4px;transform:scaleX(0.951)">0x00002301</span></div>
<div class="sel" style="top:156px"></div>
<div class="row" style="top:156px"><span class="f w" style="left:48.4px;transform:scaleX(0.965)">R1</span><span class="f w" style="left:123.4px;transform:scaleX(0.955)">0x2000003C</span></div>
<div class="row" style="top:172px"><span class="f " style="left:48.4px;transform:scaleX(0.965)">R2</span><span class="f " style="left:123.4px;transform:scaleX(0.965)">0x00000000</span></div>
<div class="sel" style="top:188px"></div>
<div class="row" style="top:188px"><span class="f w" style="left:48.4px;transform:scaleX(0.965)">R3</span><span class="f w" style="left:123.4px;transform:scaleX(0.965)">0x000022F1</span></div>
<div class="sel" style="top:204px"></div>
<div class="row" style="top:204px"><span class="f w" style="left:48.4px;transform:scaleX(0.965)">R4</span><span class="f w" style="left:123.4px;transform:scaleX(0.965)">0x000023FC</span></div>
<div class="sel" style="top:220px"></div>
<div class="row" style="top:220px"><span class="f w" style="left:48.4px;transform:scaleX(0.965)">R5</span><span class="f w" style="left:123.4px;transform:scaleX(0.965)">0x000023FC</span></div>
<div class="row" style="top:236px"><span class="f " style="left:48.4px;transform:scaleX(0.965)">R6</span><span class="f " style="left:123.4px;transform:scaleX(0.965)">0x00000000</span></div>
<div class="row" style="top:252px"><span class="f " style="left:48.4px;transform:scaleX(0.965)">R7</span><span class="f " style="left:123.4px;transform:scaleX(0.965)">0x00000000</span></div>
<div class="row" style="top:268px"><span class="f " style="left:48.4px;transform:scaleX(0.965)">R8</span><span class="f " style="left:123.4px;transform:scaleX(0.965)">0x00000000</span></div>
<div class="row" style="top:284px"><span class="f " style="left:48.4px;transform:scaleX(0.965)">R9</span><span class="f " style="left:123.4px;transform:scaleX(0.965)">0x00000000</span></div>
<div class="row" style="top:300px"><span class="f " style="left:48.4px;transform:scaleX(0.965)">R10</span><span class="f " style="left:123.4px;transform:scaleX(0.965)">0x00000000</span></div>
<div class="row" style="top:316px"><span class="f " style="left:48.4px;transform:scaleX(0.965)">R11</span><span class="f " style="left:123.4px;transform:scaleX(0.965)">0x00000000</span></div>
<div class="row" style="top:332px"><span class="f " style="left:48.4px;transform:scaleX(0.965)">R12</span><span class="f " style="left:123.4px;transform:scaleX(0.965)">0x00000000</span></div>
<div class="sel" style="top:348px"></div>
<div class="row" style="top:348px"><span class="f w" style="left:48.4px;transform:scaleX(0.941)">R13 (SP)</span><span class="f w" style="left:123.4px;transform:scaleX(0.965)">0x20020000</span></div>
<div class="sel" style="top:364px"></div>
<div class="row" style="top:364px"><span class="f w" style="left:48.4px;transform:scaleX(0.965)">R14 (LR)</span><span class="f w" style="left:123.4px;transform:scaleX(0.965)">0x000006C1</span></div>
<div class="sel" style="top:380px"></div>
<div class="row" style="top:380px"><span class="f w" style="left:48.4px;transform:scaleX(0.965)">R15 (PC)</span><span class="f w" style="left:123.4px;transform:scaleX(0.965)">0x00002300</span></div>
<div class="sel" style="top:396px"></div>
<div class="row" style="top:396px"><span class="f w" style="left:48.4px;transform:scaleX(0.928)">xPSR</span><span class="f w" style="left:123.4px;transform:scaleX(0.965)">0x61000000</span></div>
<div class="row" style="top:412px"><span class="f " style="left:28px;transform:scaleX(0.965)">Banked</span></div>
<div class="row" style="top:428px"><span class="f " style="left:28px;transform:scaleX(0.899)">System</span></div>
<div class="row" style="top:444px"><span class="f " style="left:28px;transform:scaleX(0.937)">Internal</span></div>
<div class="row" style="top:460px"><span class="f " style="left:48.4px;transform:scaleX(0.941)">Mode</span><span class="f " style="left:123.4px;transform:scaleX(0.935)">Thread</span></div>
<div class="row" style="top:476px"><span class="f " style="left:48.4px;transform:scaleX(0.920)">Privilege</span><span class="f " style="left:123.4px;transform:scaleX(0.931)">Privileged</span></div>
<div class="row" style="top:492px"><span class="f " style="left:48.4px;transform:scaleX(0.967)">Stack</span><span class="f " style="left:123.4px;transform:scaleX(0.906)">MSP</span></div>
<div class="row" style="top:508px"><span class="f " style="left:48.4px;transform:scaleX(0.917)">States</span><span class="f " style="left:123.4px;transform:scaleX(0.954)">12355</span></div>
<div class="row" style="top:524px"><span class="f " style="left:48.4px;transform:scaleX(0.954)">Sec</span><span class="f " style="left:123.4px;transform:scaleX(0.962)">0.00123550</span></div>
<div class="row" style="top:540px"><span class="f " style="left:28px;transform:scaleX(0.909)">FPU</span></div>
</div>
<div class="a" style="left:10px;top:136px;width:1px;height:411px;background:repeating-linear-gradient(180deg,#a0a0a0 0 1px,transparent 1px 2px)"></div>
<div class="a" style="left:30px;top:140px;width:1px;height:258px;background:repeating-linear-gradient(180deg,#a0a0a0 0 1px,transparent 1px 2px)"></div>
<div class="a" style="left:30px;top:460px;width:1px;height:71px;background:repeating-linear-gradient(180deg,#a0a0a0 0 1px,transparent 1px 2px)"></div>
<div class="a" style="left:30px;top:146px;width:15px;height:1px;background:repeating-linear-gradient(90deg,#a0a0a0 0 1px,transparent 1px 2px)"></div>
<div class="a" style="left:30px;top:162px;width:15px;height:1px;background:repeating-linear-gradient(90deg,#a0a0a0 0 1px,transparent 1px 2px)"></div>
<div class="a" style="left:30px;top:178px;width:15px;height:1px;background:repeating-linear-gradient(90deg,#a0a0a0 0 1px,transparent 1px 2px)"></div>
<div class="a" style="left:30px;top:194px;width:15px;height:1px;background:repeating-linear-gradient(90deg,#a0a0a0 0 1px,transparent 1px 2px)"></div>
<div class="a" style="left:30px;top:210px;width:15px;height:1px;background:repeating-linear-gradient(90deg,#a0a0a0 0 1px,transparent 1px 2px)"></div>
<div class="a" style="left:30px;top:226px;width:15px;height:1px;background:repeating-linear-gradient(90deg,#a0a0a0 0 1px,transparent 1px 2px)"></div>
<div class="a" style="left:30px;top:242px;width:15px;height:1px;background:repeating-linear-gradient(90deg,#a0a0a0 0 1px,transparent 1px 2px)"></div>
<div class="a" style="left:30px;top:258px;width:15px;height:1px;background:repeating-linear-gradient(90deg,#a0a0a0 0 1px,transparent 1px 2px)"></div>
<div class="a" style="left:30px;top:274px;width:15px;height:1px;background:repeating-linear-gradient(90deg,#a0a0a0 0 1px,transparent 1px 2px)"></div>
<div class="a" style="left:30px;top:290px;width:15px;height:1px;background:repeating-linear-gradient(90deg,#a0a0a0 0 1px,transparent 1px 2px)"></div>
<div class="a" style="left:30px;top:306px;width:15px;height:1px;background:repeating-linear-gradient(90deg,#a0a0a0 0 1px,transparent 1px 2px)"></div>
<div class="a" style="left:30px;top:322px;width:15px;height:1px;background:repeating-linear-gradient(90deg,#a0a0a0 0 1px,transparent 1px 2px)"></div>
<div class="a" style="left:30px;top:338px;width:15px;height:1px;background:repeating-linear-gradient(90deg,#a0a0a0 0 1px,transparent 1px 2px)"></div>
<div class="a" style="left:30px;top:354px;width:15px;height:1px;background:repeating-linear-gradient(90deg,#a0a0a0 0 1px,transparent 1px 2px)"></div>
<div class="a" style="left:30px;top:370px;width:15px;height:1px;background:repeating-linear-gradient(90deg,#a0a0a0 0 1px,transparent 1px 2px)"></div>
<div class="a" style="left:30px;top:386px;width:15px;height:1px;background:repeating-linear-gradient(90deg,#a0a0a0 0 1px,transparent 1px 2px)"></div>
<div class="a" style="left:36px;top:402px;width:9px;height:1px;background:repeating-linear-gradient(90deg,#a0a0a0 0 1px,transparent 1px 2px)"></div>
<div class="a" style="left:30px;top:466px;width:15px;height:1px;background:repeating-linear-gradient(90deg,#a0a0a0 0 1px,transparent 1px 2px)"></div>
<div class="a" style="left:30px;top:482px;width:15px;height:1px;background:repeating-linear-gradient(90deg,#a0a0a0 0 1px,transparent 1px 2px)"></div>
<div class="a" style="left:30px;top:498px;width:15px;height:1px;background:repeating-linear-gradient(90deg,#a0a0a0 0 1px,transparent 1px 2px)"></div>
<div class="a" style="left:30px;top:514px;width:15px;height:1px;background:repeating-linear-gradient(90deg,#a0a0a0 0 1px,transparent 1px 2px)"></div>
<div class="a" style="left:30px;top:530px;width:15px;height:1px;background:repeating-linear-gradient(90deg,#a0a0a0 0 1px,transparent 1px 2px)"></div>
<div class="a" style="left:16px;top:130px;width:9px;height:1px;background:repeating-linear-gradient(90deg,#a0a0a0 0 1px,transparent 1px 2px)"></div>
<div class="a" style="left:16px;top:418px;width:9px;height:1px;background:repeating-linear-gradient(90deg,#a0a0a0 0 1px,transparent 1px 2px)"></div>
<div class="a" style="left:16px;top:434px;width:9px;height:1px;background:repeating-linear-gradient(90deg,#a0a0a0 0 1px,transparent 1px 2px)"></div>
<div class="a" style="left:16px;top:450px;width:9px;height:1px;background:repeating-linear-gradient(90deg,#a0a0a0 0 1px,transparent 1px 2px)"></div>
<div class="a" style="left:16px;top:546px;width:9px;height:1px;background:repeating-linear-gradient(90deg,#a0a0a0 0 1px,transparent 1px 2px)"></div>
<svg class="a" style="left:6px;top:126px" width="9" height="9" viewBox="0 0 9 9"><rect x=".5" y=".5" width="8" height="8" fill="#fff" stroke="#919191"/><path d="M2 4.500h5" stroke="#000"/></svg>
<svg class="a" style="left:26px;top:398px" width="9" height="9" viewBox="0 0 9 9"><rect x=".5" y=".5" width="8" height="8" fill="#fff" stroke="#919191"/><path d="M2 4.500h5M4.500 2v5" stroke="#000"/></svg>
<svg class="a" style="left:6px;top:414px" width="9" height="9" viewBox="0 0 9 9"><rect x=".5" y=".5" width="8" height="8" fill="#fff" stroke="#919191"/><path d="M2 4.500h5M4.500 2v5" stroke="#000"/></svg>
<svg class="a" style="left:6px;top:430px" width="9" height="9" viewBox="0 0 9 9"><rect x=".5" y=".5" width="8" height="8" fill="#fff" stroke="#919191"/><path d="M2 4.500h5M4.500 2v5" stroke="#000"/></svg>
<svg class="a" style="left:6px;top:446px" width="9" height="9" viewBox="0 0 9 9"><rect x=".5" y=".5" width="8" height="8" fill="#fff" stroke="#919191"/><path d="M2 4.500h5" stroke="#000"/></svg>
<svg class="a" style="left:6px;top:542px" width="9" height="9" viewBox="0 0 9 9"><rect x=".5" y=".5" width="8" height="8" fill="#fff" stroke="#919191"/><path d="M2 4.500h5M4.500 2v5" stroke="#000"/></svg>
<div class="a" style="left:0;top:735px;width:253px;height:1px;background:#000"></div>
<div class="a" style="left:0;top:736px;width:254px;height:23px;background:#f4f4f4"></div>
<div class="a" style="left:0;top:759px;width:254px;height:4px;background:#fff"></div>
<div class="a" style="left:64px;top:735px;width:77px;height:23px;background:#f4f4f4;border:1px solid #000;border-top:none;border-left:none"></div>
<div class="a" style="left:64px;top:735px;width:76px;height:1px;background:#f4f4f4"></div>
<svg class="a" style="left:4px;top:738px" width="15" height="15" viewBox="0 0 16 16"><rect x=".5" y="1.500" width="14" height="12.500" fill="#fff" stroke="#7088b8"/><rect x="1" y="2" width="13" height="2.500" fill="#6a98e4"/><rect x="2.500" y="5.500" width="10" height="7.500" fill="#f8f4a0" stroke="#b0a860" stroke-width=".6"/><path d="M4 7.500h2M4 9.500h2M4 11.500h2M7 7.500h4M7 9.500h4M7 11.500h4" stroke="#404040" stroke-width="1.200"/></svg>
<span class="a f" style="left:22px;top:739px;font-size:11.500px;line-height:16px;color:#868686;transform:scaleX(0.950)">Project</span>
<div class="a" style="left:63px;top:739px;width:1px;height:15px;background:#a0a0a0"></div>
<svg class="a" style="left:69px;top:738px" width="15" height="15" viewBox="0 0 16 16"><rect x="1.500" y="3.500" width="13" height="2.600" fill="#5a6a88"/><rect x="1.500" y="7" width="13" height="2.600" fill="#5a6a88"/><rect x="1.500" y="10.500" width="13" height="2.600" fill="#5a6a88"/><path d="M3 4.800h10M3 8.300h10M3 11.800h10" stroke="#d0d8e8" stroke-dasharray="1.500 1"/></svg>
<span class="a f" style="left:87px;top:739px;font-size:11.500px;line-height:16px;color:#000;transform:scaleX(0.937)">Registers</span>
<div class="ttl" style="left:258px;width:835px"><span class="a f" style="left:4.300px;top:0;transform:scaleX(0.948)">Disassembly</span></div>
<div class="a" style="left:258px;top:97px;width:835px;height:81px;background:#f0f0f0"></div>
<div class="a" style="left:258px;top:99px;width:835px;height:79px;background:#fff;border-left:2px solid #696969;border-top:2px solid #696969"></div>
<div class="a" style="left:260px;top:101px;width:15px;height:59px;background:#dcdcdc"></div>
<div class="a" style="left:275px;top:133px;width:818px;height:16px;background:#ffff00"></div>
<div class="a" style="left:260px;top:160px;width:833px;height:17px;background:#f0f0f0"></div>
<div class="a mono dis" style="left:275px;top:102px;height:58px;width:818px;overflow:hidden">
<div class="a" style="left:0;top:0">    59:     BOARD_InitHardware();</div>
<div class="a" style="left:0;top:16px">    60:  </div>
<div class="a" style="left:0;top:32px;color:#000">0x00002300 F7FEFC86  BL.W          BOARD_InitHardware (0x00000C10)</div>
<div class="a" style="left:0;top:48px">    61:     PRINTF("hello world.\r\n");</div>
</div>
<div class="a" style="left:260px;top:177px;width:833px;height:1px;background:#dcdcdc"></div>
<div class="a" style="left:260px;top:101px;width:15px;height:59px;background-image:repeating-conic-gradient(#c0c0c0 0 25%,#fff 0 50%);background-size:2px 2px"></div>
<div class="a" style="left:260px;top:133px;width:15px;height:16px;background:#c0c0c0"></div>
<svg class="a" style="left:261px;top:134px" width="14" height="14" viewBox="0 0 14 14"><path d="M.5 4.500h6v-3.500l6.500 6-6.500 6v-3.500h-6z" fill="#ffff00" stroke="#000" stroke-width="1.200"/></svg>
<svg class="a" style="left:265px;top:164px" width="7" height="9" viewBox="0 0 7 9"><path d="M5.500 1l-4 3.500 4 3.500" fill="none" stroke="#505050" stroke-width="1.800"/></svg>
<div class="a" style="left:258px;top:183px;width:835px;height:1px;background:#b4b4b4"></div>
<div class="a" style="left:258px;top:184px;width:835px;height:22px;background:#f5f5f5;border-left:1px solid #b4b4b4"></div>
<svg class="a" style="left:258px;top:184px" width="300" height="23" viewBox="0 0 300 23"><path d="M130 22.500l0-17c0-2 1-3 3-3h155c2 0 3 1 3 3v17z" fill="#bac79b" stroke="#a8b48c"/><path d="M3 22.500l22-19c1-.8 2-1 3-1h99c2 0 3 1 3 3v17z" fill="#ffd97c" stroke="#c8c0a8"/></svg>
<svg class="a" style="left:288px;top:189px" width="13" height="14" viewBox="0 0 12 14"><path d="M.5 .5h8l3 3v10h-11z" fill="#fff" stroke="#4a6aa8"/><path d="M1 1h4.500v12h-4.500z" fill="#d4d4d4"/><path d="M8.500 .5v3h3" fill="#e8eefa" stroke="#4a6aa8"/></svg>
<svg class="a" style="left:398px;top:189px" width="13" height="14" viewBox="0 0 12 14"><path d="M.5 .5h8l3 3v10h-11z" fill="#fff" stroke="#4a6aa8"/><path d="M1 1h4.500v12h-4.500z" fill="#d4d4d4"/><path d="M8.500 .5v3h3" fill="#e8eefa" stroke="#4a6aa8"/></svg>
<span class="a f" style="transform:scaleX(0.893);left:309.5px;top:188px;font-size:12px;line-height:16px;font-weight:bold;color:#000;white-space:nowrap">hello_world.c</span>
<div class="a" style="left:305px;top:204px;width:77px;height:2px;background:#000"></div>
<span class="a f" style="transform:scaleX(0.901);left:422.5px;top:188px;font-size:12px;line-height:16px;color:#000;white-space:nowrap">startup_MIMXRT1052.s</span>
<div class="a" style="left:259px;top:206px;width:834px;height:551px;background:#fff;border-left:3px solid #ffd969;border-top:2px solid #ffd969"></div>
<div class="a" style="left:262px;top:208px;width:63px;height:529px;background:#e6e6e6"></div>
<div class="a" style="left:325px;top:208px;width:14px;height:529px;background-image:repeating-conic-gradient(#e6e6e6 0 25%,#fff 0 50%);background-size:2px 2px"></div>
<div class="a" style="left:340px;top:546px;width:753px;height:16px;background:#dcfae0"></div>
<div class="mono">
<div class="ln" style="top:211px">38</div><div class="cl" style="top:211px"><span class="pp">#include </span><span class="st">"app.h"</span></div>
<div class="ln" style="top:227px">39</div><div class="cl" style="top:227px"></div>
<div class="ln" style="top:243px">40</div><div class="cl" style="top:243px"><span class="cm">/<span class="as">*******************************************************************************</span></span></div>
<div class="ln" style="top:259px">41</div><div class="cl" style="top:259px"><span class="cm"> * Definitions</span></div>
<div class="ln" style="top:275px">42</div><div class="cl" style="top:275px"><span class="cm"> <span class="as">******************************************************************************</span>/</span></div>
<div class="ln" style="top:291px">43</div><div class="cl" style="top:291px"></div>
<div class="ln" style="top:307px">44</div><div class="cl" style="top:307px"><span class="cm">/<span class="as">*******************************************************************************</span></span></div>
<div class="ln" style="top:323px">45</div><div class="cl" style="top:323px"><span class="cm"> * Prototypes</span></div>
<div class="ln" style="top:339px">46</div><div class="cl" style="top:339px"><span class="cm"> <span class="as">******************************************************************************</span>/</span></div>
<div class="ln" style="top:355px">47</div><div class="cl" style="top:355px"></div>
<div class="ln" style="top:371px">48</div><div class="cl" style="top:371px"><span class="cm">/<span class="as">*******************************************************************************</span></span></div>
<div class="ln" style="top:387px">49</div><div class="cl" style="top:387px"><span class="cm"> * Code</span></div>
<div class="ln" style="top:403px">50</div><div class="cl" style="top:403px"><span class="cm"> <span class="as">******************************************************************************</span>/</span></div>
<div class="ln" style="top:419px">51</div><div class="cl" style="top:419px"><span class="cm">/*!</span></div>
<div class="ln" style="top:435px">52</div><div class="cl" style="top:435px"><span class="cm"> * </span><span style="color:#804000">@brief</span><span class="cm"> Main function</span></div>
<div class="ln" style="top:451px">53</div><div class="cl" style="top:451px"><span class="cm"> */</span></div>
<div class="ln" style="top:467px">54</div><div class="cl" style="top:467px"><span class="kw">int</span> main(<span class="kw">void</span>)</div>
<div class="ln" style="top:483px">55</div><div class="cl" style="top:483px">{</div>
<div class="ln" style="top:499px">56</div><div class="cl" style="top:499px">    <span class="kw">char</span> ch;</div>
<div class="ln" style="top:515px">57</div><div class="cl" style="top:515px"></div>
<div class="ln" style="top:531px">58</div><div class="cl" style="top:531px">    <span class="cm">/* Init board hardware. */</span></div>
<div class="ln" style="top:547px">59</div><div class="cl" style="top:547px">    BOARD_InitHardware();</div>
<div class="ln" style="top:563px">60</div><div class="cl" style="top:563px"></div>
<div class="ln" style="top:579px">61</div><div class="cl" style="top:579px">    PRINTF(<span class="st">"hello world.\r\n"</span>);</div>
<div class="ln" style="top:595px">62</div><div class="cl" style="top:595px"></div>
<div class="ln" style="top:611px">63</div><div class="cl" style="top:611px">    <span class="kw">while</span> (<span class="nm">1</span>)</div>
<div class="ln" style="top:627px">64</div><div class="cl" style="top:627px">    {</div>
<div class="ln" style="top:643px">65</div><div class="cl" style="top:643px">        ch = GETCHAR();</div>
<div class="ln" style="top:659px">66</div><div class="cl" style="top:659px">        PUTCHAR(ch);</div>
<div class="ln" style="top:675px">67</div><div class="cl" style="top:675px">    }</div>
<div class="ln" style="top:691px">68</div><div class="cl" style="top:691px">}</div>
<div class="ln" style="top:707px">69</div><div class="cl" style="top:707px"></div>
</div>
<div class="a" style="left:263px;top:546px;width:20px;height:16px;background:#c0c0c0"></div>
<div class="a" style="left:263px;top:578px;width:20px;height:16px;background:#c0c0c0"></div>
<div class="a" style="left:263px;top:610px;width:20px;height:16px;background:#c0c0c0"></div>
<div class="a" style="left:263px;top:642px;width:20px;height:32px;background:#c0c0c0"></div>
<svg class="a" style="left:264px;top:546px" width="18" height="16" viewBox="0 0 18 16"><path d="M1 .8l7 7.200-7 7.200z" fill="#4ff" stroke="#000" stroke-width="1"/><path d="M9 .8l7.500 7.200-7.500 7.200z" fill="#ff0" stroke="#000" stroke-width="1"/></svg>
<div class="a" style="left:340px;top:546px;width:1px;height:16px;background:#000"></div>
<svg class="a" style="left:327px;top:0px" width="12" height="773" viewBox="0 0 12 773"><rect x="0.5" y="245.5" width="10" height="10" fill="#fff" stroke="#808080"/><path d="M2.500 250.5h6" stroke="#808080"/><path d="M5.500 256v34" stroke="#808080"/><path d="M5.500 290v8.500h5.500" stroke="#808080" fill="none"/><rect x="0.5" y="309.5" width="10" height="10" fill="#fff" stroke="#808080"/><path d="M2.500 314.5h6" stroke="#808080"/><path d="M5.500 320v34" stroke="#808080"/><path d="M5.500 354v8.500h5.500" stroke="#808080" fill="none"/><rect x="0.5" y="373.5" width="10" height="10" fill="#fff" stroke="#808080"/><path d="M2.500 378.5h6" stroke="#808080"/><path d="M5.500 384v18" stroke="#808080"/><path d="M5.500 402v8.500h5.500" stroke="#808080" fill="none"/><rect x="0.5" y="421.5" width="10" height="10" fill="#fff" stroke="#808080"/><path d="M2.500 426.5h6" stroke="#808080"/><path d="M5.500 432v18" stroke="#808080"/><path d="M5.500 450v8.500h5.500" stroke="#808080" fill="none"/><rect x="0.5" y="485.5" width="10" height="10" fill="#fff" stroke="#808080"/><path d="M2.500 490.5h6" stroke="#808080"/><path d="M5.500 496v133" stroke="#808080"/><rect x="0.5" y="629.5" width="10" height="10" fill="#fff" stroke="#808080"/><path d="M2.500 634.5h6" stroke="#808080"/><path d="M5.500 640v66" stroke="#808080"/><path d="M5.500 682.5h5.500" stroke="#808080" fill="none"/><path d="M5.500 706v8.500h5.500" stroke="#808080" fill="none"/></svg>
<div class="a" style="left:263px;top:737px;width:830px;height:18px;background:#f0f0f0"></div>
<div class="a" style="left:280px;top:738px;width:813px;height:15px;background:#cdcdcd"></div>
<svg class="a" style="left:268px;top:741px" width="7" height="9" viewBox="0 0 7 9"><path d="M5.500 1l-4 3.500 4 3.500" fill="none" stroke="#505050" stroke-width="1.800"/></svg>
<div class="a" style="left:259px;top:755px;width:834px;height:3px;background:#ffd969"></div>
<div class="a" style="left:258px;top:758px;width:835px;height:1px;background:#b4b4b4"></div>
<div class="a" style="left:258px;top:206px;width:1px;height:553px;background:#b4b4b4"></div>
<div class="a" style="left:261px;top:207px;width:2px;height:548px;background:linear-gradient(90deg,rgba(105,105,105,.45),#696969)"></div>
<div class="a" style="left:262px;top:208px;width:831px;height:1px;background:#696969"></div>
<div class="a" style="left:0;top:763px;width:956px;height:10px;background:linear-gradient(#bfcddd,#c7d3e2)"></div>
<div class="a" style="left:961px;top:763px;width:132px;height:10px;background:linear-gradient(#bfcddd,#c7d3e2)"></div>
<span class="a f" style="transform:scaleX(0.900);left:2px;top:766px;font-size:12px;line-height:16px;white-space:nowrap">Command</span>
<span class="a f" style="transform:scaleX(0.900);left:966px;top:766px;font-size:12px;line-height:16px;white-space:nowrap">Call Stack + Locals</span>
<div class="a" style="left:941px;top:767px;width:12px;height:6px;background:#c75050"></div>
<svg class="a" style="left:925px;top:768px" width="8" height="5" viewBox="0 0 8 5"><path d="M1.500 .5h5M2.500 .5v4.500" stroke="#000" fill="none"/><rect x="4.500" y=".5" width="2" height="4.500" fill="#000"/></svg>
<svg class="a" style="left:941px;top:767px" width="12" height="6" viewBox="0 0 12 6"><path d="M3.500 3.500l2.500 2.500M8.500 3.500l-2.500 2.500" stroke="#fff" stroke-width="1.600"/></svg>
</body></html>
